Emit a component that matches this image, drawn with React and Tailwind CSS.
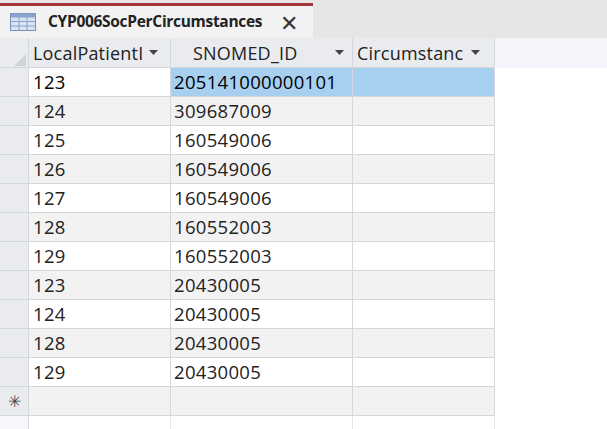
export default function App() {
  const rows = [["123","205141000000101"],["124","309687009"],["125","160549006"],["126","160549006"],["127","160549006"],["128","160552003"],["129","160552003"],["123","20430005"],["124","20430005"],["128","20430005"],["129","20430005"]];
  const arrow = <svg width="9" height="5" viewBox="0 0 9 5"><path d="M0 0h9L4.5 5z" fill="#444"/></svg>;
  const line = "border-r border-b border-[#d4d7de]";
  return (
    <div className="w-[607px] h-[429px] overflow-hidden bg-white text-[#222]" style={{fontFamily:'"Open Sans","Noto Sans",sans-serif'}}>
      <div className="h-[38px] bg-[#e6e6e6] pt-[3px] flex">
        <div className="w-[313px] flex flex-col">
          <div className="h-[3px] bg-[#a4373a]" />
          <div className="flex-1 bg-[#f2f2f2] flex items-center pl-[10px]">
            <svg width="26" height="18" viewBox="0 0 26 18"><rect x="0.5" y="0.5" width="25" height="17" fill="#d9e3f2" stroke="#7a90b8"/><rect x="0.5" y="0.5" width="25" height="4" fill="#8aa3cc"/><path d="M9 1v16M17 1v16M1 8.5h24M1 13h24" stroke="#8aa3cc"/></svg>
            <span className="ml-[12px] text-[15.5px] font-bold tracking-[-0.3px]">CYP006SocPerCircumstances</span>
            <span className="ml-[18px] text-[22px] leading-none font-light text-[#333]">✕</span>
          </div>
        </div>
      </div>
      <div className="flex text-[18px] leading-none bg-[#f5f6fc] tracking-[0.2px]">
        <div className="w-[29px] h-[30px] bg-[#e9ebef] border-r border-b border-[#d4d7de] relative">
          <svg className="absolute left-[14px] top-[16px]" width="12" height="12" viewBox="0 0 12 12"><path d="M12 0v12H0z" fill="#d0d3d8"/></svg>
        </div>
        <div className={`w-[142px] h-[30px] bg-[#e9ebef] ${line} flex items-center pl-[4px] gap-[6px] overflow-hidden`}>LocalPatientI{arrow}</div>
        <div className={`w-[182px] h-[30px] bg-[#e9ebef] ${line} flex items-center pl-[22px]`}><span className="flex-1">SNOMED_ID</span><span className="mr-[8px]">{arrow}</span></div>
        <div className={`w-[142px] h-[30px] bg-[#e9ebef] ${line} flex items-center pl-[4px] gap-[8px] overflow-hidden`}>Circumstanc{arrow}</div>
      </div>
      {rows.map((r,i)=>{
        const bg = i%2? "bg-[#f2f2f2]":"bg-white";
        return (
        <div key={i} className={`flex text-[18.5px] tracking-[0.3px] ${i===0?"text-black":""}`}>
          <div className="w-[29px] h-[29px] bg-[#e9ebef] border-r border-b border-[#d4d7de]" />
          <div className={`w-[142px] h-[29px] ${line} ${bg} flex items-center pl-[4px]`}>{r[0]}</div>
          <div className={`w-[182px] h-[29px] ${line} flex items-center pl-[3px] ${i===0?"bg-[#a6cff0]":bg}`}>{r[1]}</div>
          <div className={`w-[142px] h-[29px] ${line} ${i===0?"bg-[#a6cff0]":bg}`} />
        </div>);
      })}
      <div className="flex">
        <div className="w-[29px] h-[29px] bg-[#e9ebef] border-r border-b border-[#d4d7de] flex items-center justify-center text-[16px] text-[#444]">✳</div>
        <div className={`w-[142px] h-[29px] bg-[#f2f2f2] ${line}`} />
        <div className={`w-[182px] h-[29px] bg-[#f2f2f2] ${line}`} />
        <div className={`w-[142px] h-[29px] bg-[#f2f2f2] ${line}`} />
      </div>
      <div className="flex h-[20px]">
        <div className="w-[29px] bg-[#f6f7fd] border-r border-[#d4d7de]" />
        <div className="w-[142px] border-r border-[#e4e6ea]" />
        <div className="w-[182px] border-r border-[#e4e6ea]" />
        <div className="w-[142px] border-r border-[#e4e6ea]" />
      </div>
    </div>
  );
}
